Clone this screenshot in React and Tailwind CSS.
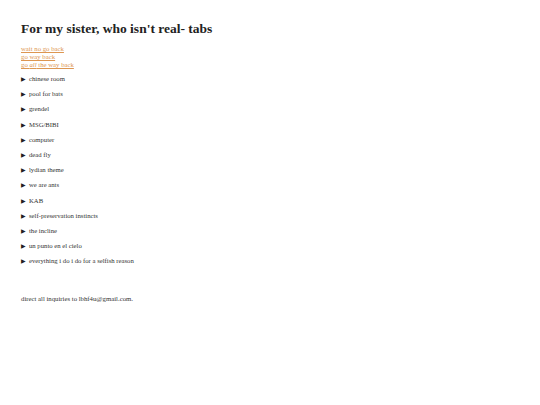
import React from 'react';

const items = [
  'chinese room',
  'pool for bats',
  'grendel',
  'MSG/BIBI',
  'computer',
  'dead fly',
  'lydian theme',
  'we are ants',
  'KAB',
  'self-preservation instincts',
  'the incline',
  'un punto en el cielo',
  'everything i do i do for a selfish reason',
];

export default function App() {
  return (
    <div className="min-h-screen bg-white px-[21px] pt-[20px] text-[#333] [font-family:'Liberation_Serif','Times_New_Roman',serif]">
      <h1 className="text-[13.5px] leading-[18px] font-bold text-[#222]">
        For my sister, who isn't real- tabs
      </h1>

      <div className="mt-[7px] flex flex-col text-[6.75px] leading-[8px] text-[#dd9651]">
        <a href="#" className="underline">wait no go back</a>
        <a href="#" className="underline">go way back</a>
        <a href="#" className="underline">
          go <i>all</i> the way back
        </a>
      </div>

      <div className="mt-[6px] flex flex-col gap-[7.2px]">
        {items.map((name) => (
          <details key={name} className="text-[6.7px] leading-[8px]">
            <summary className="cursor-pointer list-none flex items-center gap-[3px]">
              <span className="text-[6px] text-[#222]">▶</span>
              <span>{name}</span>
            </summary>
          </details>
        ))}
      </div>

      <p className="mt-[30px] text-[6.75px] leading-[8px]">
        direct all inquiries to lbhf4u@gmail.com.
      </p>
    </div>
  );
}
